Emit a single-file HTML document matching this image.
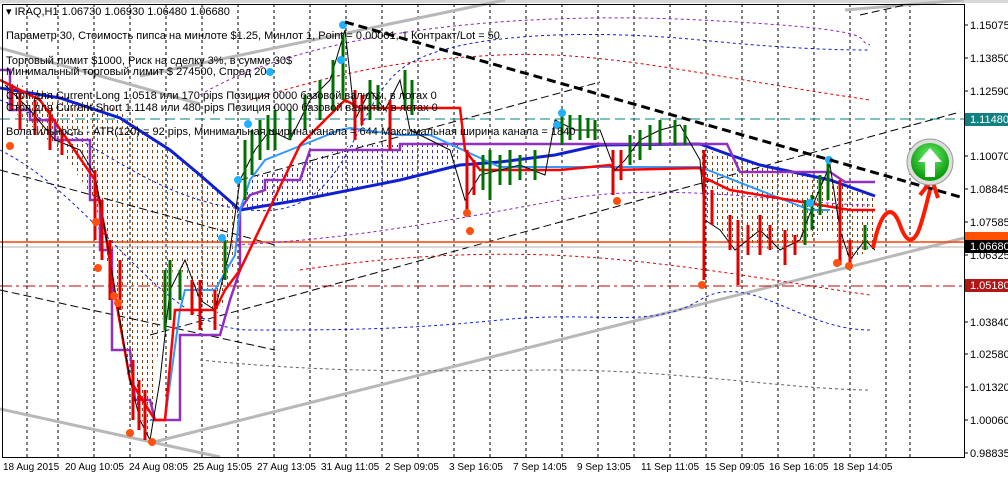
<!DOCTYPE html>
<html><head><meta charset="utf-8"><style>
html,body{margin:0;padding:0;background:#fff;}
svg{display:block;font-family:"Liberation Sans",sans-serif;}
</style></head><body>
<svg width="1008" height="477" viewBox="0 0 1008 477" xmlns="http://www.w3.org/2000/svg">
<defs>
<pattern id="hb" width="5" height="6" patternUnits="userSpaceOnUse"><rect x="2" y="0" width="1" height="3" fill="#8b3a0a"/></pattern>
<pattern id="hp" width="5" height="6" patternUnits="userSpaceOnUse"><rect x="2" y="0" width="1" height="3" fill="#4030a0"/></pattern>
<radialGradient id="gb" cx="50%" cy="35%" r="60%"><stop offset="0" stop-color="#6ef06e"/><stop offset="1" stop-color="#0a9a0a"/></radialGradient>
</defs>
<rect width="1008" height="477" fill="#fff"/>
<rect x="0" y="0" width="1008" height="3" fill="#d8d8d8"/>
<g stroke="#000" stroke-width="1" stroke-dasharray="3,3">
<line x1="27" y1="4" x2="27" y2="457"/>
<line x1="58" y1="4" x2="58" y2="457"/><line x1="94" y1="4" x2="94" y2="457"/><line x1="130" y1="4" x2="130" y2="457"/><line x1="166" y1="4" x2="166" y2="457"/><line x1="202" y1="4" x2="202" y2="457"/><line x1="238" y1="4" x2="238" y2="457"/><line x1="274" y1="4" x2="274" y2="457"/><line x1="310" y1="4" x2="310" y2="457"/><line x1="346" y1="4" x2="346" y2="457"/><line x1="382" y1="4" x2="382" y2="457"/><line x1="418" y1="4" x2="418" y2="457"/><line x1="454" y1="4" x2="454" y2="457"/><line x1="490" y1="4" x2="490" y2="457"/><line x1="526" y1="4" x2="526" y2="457"/><line x1="562" y1="4" x2="562" y2="457"/><line x1="598" y1="4" x2="598" y2="457"/><line x1="634" y1="4" x2="634" y2="457"/><line x1="670" y1="4" x2="670" y2="457"/><line x1="706" y1="4" x2="706" y2="457"/><line x1="742" y1="4" x2="742" y2="457"/><line x1="778" y1="4" x2="778" y2="457"/><line x1="814" y1="4" x2="814" y2="457"/><line x1="850" y1="4" x2="850" y2="457"/><line x1="886" y1="4" x2="886" y2="457"/><line x1="910" y1="4" x2="910" y2="457"/>
</g>
<path d="M0,80 L60,95 L120,110 L180,160 L240,210 L235,260 L220,315 L200,300 L175,260 L160,330 L150,440 L130,390 L115,300 L95,200 L60,150 L0,100Z" fill="url(#hb)"/>
<path d="M240,210 L300,200 L400,180 L460,160 L460,145 L350,145 L300,165 L250,178Z" fill="url(#hp)"/>
<path d="M700,148 L760,165 L830,180 L875,195 L875,248 L850,260 L830,230 L780,250 L735,245 L705,215Z" fill="url(#hb)"/>
<g stroke="#b8b8b8" stroke-width="3" fill="none">
<line x1="0" y1="48" x2="200" y2="104"/>
<line x1="140" y1="76" x2="505" y2="0"/>
<line x1="0" y1="409" x2="220" y2="457"/>
<line x1="150" y1="443" x2="964" y2="238"/>
<line x1="845" y1="10" x2="964" y2="0"/>
</g>
<g stroke="#000" stroke-width="1" stroke-dasharray="8,4" fill="none">
<line x1="0" y1="170" x2="275" y2="245"/>
<line x1="0" y1="290" x2="275" y2="350"/>
<line x1="150" y1="335" x2="960" y2="112"/>
<line x1="240" y1="180" x2="600" y2="82"/>
<line x1="860" y1="15" x2="905" y2="5"/>
</g>
<line x1="0" y1="119" x2="964" y2="119" stroke="#008080" stroke-dasharray="10,5"/>
<line x1="0" y1="242" x2="964" y2="242" stroke="#ff4000" stroke-width="1.5"/>
<line x1="0" y1="247" x2="964" y2="247" stroke="#b0b0b0"/>
<line x1="0" y1="286" x2="964" y2="286" stroke="#c00000" stroke-dasharray="12,4,3,4"/>
<g fill="none" stroke-width="1" stroke-dasharray="3,3">
<path d="M0,150 C100,200 160,330 250,330 S400,330 500,320 S650,330 700,300 S800,330 870,330" stroke="#1020d0"/>
<path d="M0,100 C100,140 150,200 250,210 S350,110 400,70 S600,30 700,40 S850,50 870,50" stroke="#1020d0"/>
<path d="M250,100 C350,70 400,60 500,55 S700,75 870,100" stroke="#e00000"/>
<path d="M300,270 C400,255 500,250 600,258 S800,285 870,295" stroke="#e00000"/>
<path d="M200,95 C300,35 500,10 700,20 S850,40 870,45" stroke="#9020c0"/>
<path d="M230,245 C350,240 450,220 560,200 S800,205 870,205" stroke="#9020c0"/>
<path d="M200,360 C350,375 450,370 560,370 S800,390 870,390" stroke="#606060"/>
</g>
<polyline points="0,88 60,98 120,118 170,150 200,175 240,210 300,200 400,180 460,165 500,162 555,155 600,145 700,144 730,155 760,165 830,180 875,196" fill="none" stroke="#1020d0" stroke-width="3"/>
<polyline points="0,70 10,70 10,110 30,110 30,120 55,120 55,140 90,140 90,200 100,200 100,250 112,250 112,350 130,350 135,400 150,400 155,420 180,420 180,335 220,335 230,300 240,270 240,210 250,195 265,190 265,180 300,180 310,150 400,150 400,144 727,144 740,172 830,172 845,182 875,182" fill="none" stroke="#9030c0" stroke-width="2.5"/>
<polyline points="150,420 165,420 180,310 185,290 215,290 235,255 240,210 250,180 265,160 290,150 310,142 340,130 350,128 400,135 430,135 500,167 700,167 810,210 830,210" fill="none" stroke="#3399ff" stroke-width="2"/>
<polyline points="0,80 40,100 95,180 105,230 115,295 130,380 155,420 165,420 175,310 215,310 225,290 240,270 300,145 345,100 360,108 460,108 465,150 480,170 560,170 610,165 615,170 700,168 705,178 730,190 850,210 875,210" fill="none" stroke="#ff0000" stroke-width="2.5"/>
<polyline points="5,85 30,110 55,140 80,150 95,175 105,230 115,290 130,380 140,420 150,440 160,380 170,290 185,260 200,300 215,310 230,250 240,180 255,150 270,130 290,140 310,100 330,80 345,30 355,120 370,90 385,110 400,80 410,130 430,140 450,150 465,200 480,175 500,170 520,165 545,175 555,120 575,130 600,130 615,170 625,160 640,140 660,130 680,125 700,160 705,220 720,230 735,250 760,230 780,250 800,240 815,200 830,165 840,230 850,260 865,240 875,250" fill="none" stroke="#000" stroke-width="1"/>
<g stroke="#e00000" stroke-width="3">
<line x1="12" y1="85" x2="12" y2="110"/><line x1="20" y1="90" x2="20" y2="130"/><line x1="35" y1="100" x2="35" y2="135"/><line x1="50" y1="110" x2="50" y2="150"/><line x1="62" y1="130" x2="62" y2="155"/><line x1="95" y1="170" x2="95" y2="240"/><line x1="102" y1="200" x2="102" y2="260"/><line x1="110" y1="240" x2="110" y2="300"/><line x1="120" y1="260" x2="120" y2="310"/><line x1="133" y1="360" x2="133" y2="420"/><line x1="139" y1="380" x2="139" y2="430"/><line x1="145" y1="390" x2="145" y2="440"/><line x1="192" y1="280" x2="192" y2="315"/><line x1="200" y1="280" x2="200" y2="330"/><line x1="215" y1="290" x2="215" y2="330"/><line x1="355" y1="90" x2="355" y2="140"/><line x1="362" y1="95" x2="362" y2="125"/><line x1="390" y1="100" x2="390" y2="150"/><line x1="467" y1="150" x2="467" y2="210"/><line x1="474" y1="160" x2="474" y2="195"/><line x1="613" y1="150" x2="613" y2="195"/><line x1="621" y1="150" x2="621" y2="180"/><line x1="704" y1="150" x2="704" y2="280"/><line x1="712" y1="190" x2="712" y2="225"/><line x1="730" y1="215" x2="730" y2="250"/><line x1="738" y1="220" x2="738" y2="285"/><line x1="748" y1="225" x2="748" y2="255"/><line x1="760" y1="215" x2="760" y2="255"/><line x1="770" y1="225" x2="770" y2="250"/><line x1="785" y1="230" x2="785" y2="265"/><line x1="795" y1="235" x2="795" y2="255"/><line x1="840" y1="180" x2="840" y2="265"/><line x1="850" y1="240" x2="850" y2="268"/>
</g>
<g stroke="#007000" stroke-width="3">
<line x1="165" y1="270" x2="165" y2="330"/><line x1="170" y1="260" x2="170" y2="320"/><line x1="180" y1="270" x2="180" y2="300"/><line x1="225" y1="240" x2="225" y2="280"/><line x1="245" y1="140" x2="245" y2="200"/><line x1="252" y1="130" x2="252" y2="175"/><line x1="260" y1="120" x2="260" y2="160"/><line x1="268" y1="115" x2="268" y2="150"/><line x1="275" y1="110" x2="275" y2="150"/><line x1="290" y1="110" x2="290" y2="140"/><line x1="305" y1="95" x2="305" y2="130"/><line x1="320" y1="80" x2="320" y2="120"/><line x1="333" y1="60" x2="333" y2="110"/><line x1="343" y1="35" x2="343" y2="100"/><line x1="370" y1="80" x2="370" y2="120"/><line x1="378" y1="85" x2="378" y2="110"/><line x1="405" y1="70" x2="405" y2="110"/><line x1="412" y1="80" x2="412" y2="115"/><line x1="483" y1="155" x2="483" y2="190"/><line x1="490" y1="150" x2="490" y2="200"/><line x1="500" y1="155" x2="500" y2="185"/><line x1="510" y1="150" x2="510" y2="185"/><line x1="520" y1="155" x2="520" y2="180"/><line x1="535" y1="150" x2="535" y2="180"/><line x1="562" y1="110" x2="562" y2="145"/><line x1="570" y1="115" x2="570" y2="140"/><line x1="580" y1="115" x2="580" y2="140"/><line x1="588" y1="118" x2="588" y2="138"/><line x1="595" y1="120" x2="595" y2="140"/><line x1="630" y1="135" x2="630" y2="165"/><line x1="640" y1="130" x2="640" y2="160"/><line x1="650" y1="125" x2="650" y2="150"/><line x1="660" y1="120" x2="660" y2="145"/><line x1="675" y1="120" x2="675" y2="145"/><line x1="685" y1="125" x2="685" y2="145"/><line x1="805" y1="200" x2="805" y2="245"/><line x1="812" y1="195" x2="812" y2="230"/><line x1="820" y1="175" x2="820" y2="215"/><line x1="828" y1="160" x2="828" y2="200"/><line x1="865" y1="225" x2="865" y2="250"/>
</g>
<g fill="#ff5010"><circle cx="10" cy="146" r="4"/><circle cx="96" cy="222" r="4"/><circle cx="98" cy="268" r="4"/><circle cx="114" cy="296" r="4"/><circle cx="118" cy="303" r="4"/><circle cx="130" cy="433" r="4"/><circle cx="152" cy="442" r="4"/><circle cx="467" cy="213" r="4"/><circle cx="470" cy="231" r="4"/><circle cx="617" cy="201" r="4"/><circle cx="702" cy="285" r="4"/><circle cx="837" cy="263" r="4"/><circle cx="849" cy="266" r="4"/></g>
<g fill="#20b0ff"><circle cx="222" cy="238" r="4"/><circle cx="238" cy="180" r="4"/><circle cx="248" cy="124" r="4"/><circle cx="270" cy="72" r="4"/><circle cx="343" cy="25" r="4"/><circle cx="341" cy="60" r="4"/><circle cx="562" cy="113" r="4"/><circle cx="557" cy="125" r="4"/><circle cx="829" cy="160" r="4"/><circle cx="810" cy="203" r="4"/></g>
<line x1="345" y1="22" x2="964" y2="198" stroke="#000" stroke-width="3" stroke-dasharray="9,5"/>
<path d="M873,248 C882,205 893,205 900,225 C906,242 912,244 918,232 C923,220 926,205 930,190" fill="none" stroke="#ff1a00" stroke-width="4"/>
<path d="M920,195 L932,180 L938,198" fill="none" stroke="#ff1a00" stroke-width="4"/>
<circle cx="930" cy="162" r="23" fill="#ddd" stroke="#999"/>
<circle cx="930" cy="162" r="19" fill="url(#gb)"/>
<path d="M930,148 L942,162 L935,162 L935,177 L925,177 L925,162 L918,162Z" fill="#fff"/>
<g font-size="11" fill="#000">
<text x="6" y="15">▾ IRAQ,H1  1.06730 1.06930 1.06480 1.06680</text>
<text x="6" y="39">Параметр 30,  Стоимость пипса на минлоте  $1.25,   Минлот 1,  Point = 0.00001,  1 Контракт/Lot = 50</text>
<text x="6" y="64">Торговый лимит  $1000, Риск на сделку 3%,  в сумме 30$</text>
<text x="6" y="75">Минимальный торговый лимит  $ 274500,   Спред  20</text>
<text x="6" y="99">Стоп для Current Long  1.0518  или  170 pips   Позиция 0000 базовой валюты,  в лотах 0</text>
<text x="6" y="111">Стоп для Current Short 1.1148  или  480 pips   Позиция 0000 базовой валюты,  в лотах 0</text>
<text x="6" y="135">Волатильность - ATR(120) = 92 pips,  Минимальная ширина канала = 644   Максимальная ширина канала = 1840</text>
</g>
<rect x="2.5" y="4.5" width="962" height="453" fill="none" stroke="#000"/>
<g font-size="11" fill="#000">
<g stroke="#000"><line x1="964" y1="25" x2="968" y2="25"/><line x1="964" y1="58" x2="968" y2="58"/><line x1="964" y1="91" x2="968" y2="91"/><line x1="964" y1="156" x2="968" y2="156"/><line x1="964" y1="189" x2="968" y2="189"/><line x1="964" y1="222" x2="968" y2="222"/><line x1="964" y1="255" x2="968" y2="255"/><line x1="964" y1="322" x2="968" y2="322"/><line x1="964" y1="354" x2="968" y2="354"/><line x1="964" y1="387" x2="968" y2="387"/><line x1="964" y1="420" x2="968" y2="420"/><line x1="964" y1="453" x2="968" y2="453"/></g>
<text x="970" y="29">1.15075</text><text x="970" y="62">1.13850</text><text x="970" y="95">1.12590</text>
<text x="970" y="160">1.10070</text><text x="970" y="193">1.08845</text><text x="970" y="226">1.07585</text>
<text x="970" y="259">1.06325</text><text x="970" y="326">1.03840</text><text x="970" y="358">1.02580</text>
<text x="970" y="391">1.01320</text><text x="970" y="424">1.00060</text><text x="970" y="457">0.98835</text>
<rect x="965" y="113" width="43" height="13" fill="#108080"/><text x="970" y="123" fill="#fff">1.11480</text>
<rect x="965" y="232" width="43" height="8" fill="#ff5000"/>
<rect x="965" y="240" width="43" height="13" fill="#000"/><text x="970" y="250" fill="#fff">1.06680</text>
<rect x="965" y="279" width="43" height="13" fill="#b01818"/><text x="970" y="289" fill="#fff">1.05180</text>
</g>
<g font-size="10" fill="#000">
<text x="3" y="470">18 Aug 2015</text><text x="65" y="470">20 Aug 10:05</text><text x="129" y="470">24 Aug 08:05</text>
<text x="193" y="470">25 Aug 15:05</text><text x="257" y="470">27 Aug 13:05</text><text x="321" y="470">31 Aug 11:05</text>
<text x="385" y="470">2 Sep 09:05</text><text x="449" y="470">3 Sep 16:05</text><text x="513" y="470">7 Sep 14:05</text>
<text x="577" y="470">9 Sep 13:05</text><text x="641" y="470">11 Sep 11:05</text><text x="705" y="470">15 Sep 09:05</text>
<text x="769" y="470">16 Sep 16:05</text><text x="833" y="470">18 Sep 14:05</text>
</g>
</svg>
</body></html>
